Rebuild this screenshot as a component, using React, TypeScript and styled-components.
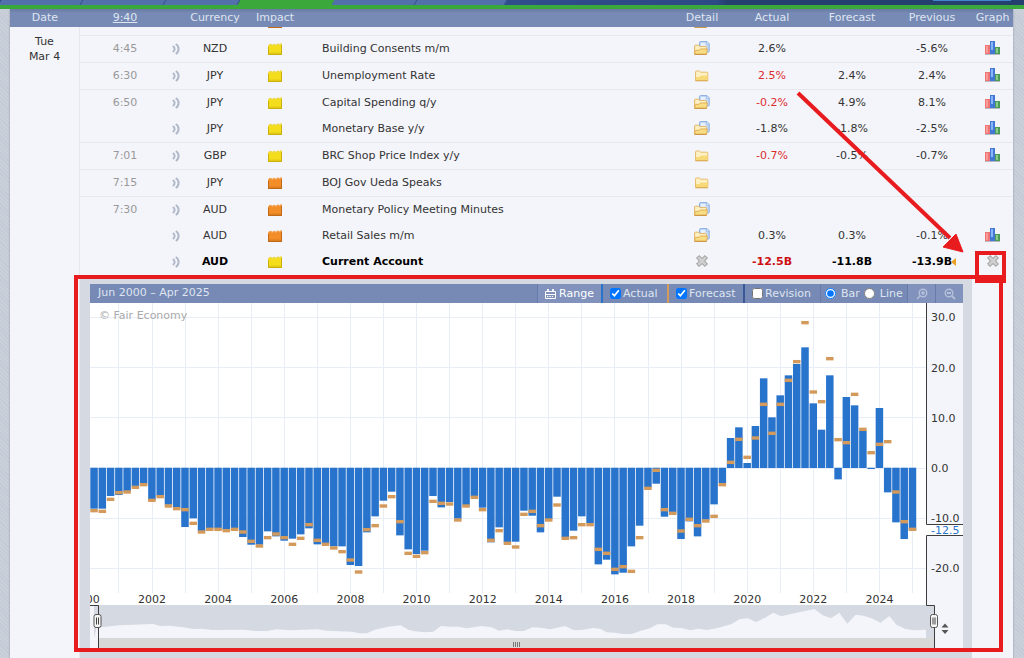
import React from "react";
import styled, { createGlobalStyle, css } from "styled-components";

const GlobalStyle = createGlobalStyle`
  *, *::before, *::after { box-sizing: border-box; }
  body {
    margin: 0;
    font-family: Verdana, "DejaVu Sans", sans-serif;
    font-size: 11px;
    color: #333;
    background: repeating-linear-gradient(45deg, #c3cad5 0 1px, #cad0da 1px 3px);
  }
  button { font: inherit; color: inherit; border: 0; padding: 0; background: none; cursor: pointer; }
`;

/* ---------- top navigation ---------- */

const NavStrip = styled.nav`
  position: relative;
  z-index: 1;
  display: flex;
  height: 9px;
  overflow: hidden;
  background: linear-gradient(90deg, #304d8c 50%, #2d4a85 70%, #25406f 71%);
  border-bottom: 4px solid #3aa83a;
`;

const NavTab = styled.a<{ $width: number; $active?: boolean }>`
  flex: none;
  width: ${(p) => p.$width}px;
  background: ${(p) => (p.$active ? "#3aa83a" : "#5270aa")};
  border-right: 1px solid ${(p) => (p.$active ? "#3aa83a" : "#33508b")};
  transform: skewX(-30deg);
`;

const NavSearch = styled.span`
  width: 78px;
  height: 1px;
  margin: 0 13px 0 auto;
  background: #3f86cf;
`;

const TABS = [
  { width: 82 },
  { width: 83 },
  { width: 74 },
  { width: 94, active: true },
  { width: 83 },
  { width: 90 },
];

/* ---------- calendar table ---------- */

const Sheet = styled.main`
  margin: 0 11px 0 10px;
  background: #f4f5fa;
  box-shadow: 0 0 2px #8d95a3;
`;

const Calendar = styled.table`
  width: 100%;
  table-layout: fixed;
  border-collapse: separate;
  border-spacing: 0;
`;

const Col = styled.col<{ $width?: number }>`
  width: ${(p) => (p.$width ? `${p.$width}px` : "auto")};
`;

const HeadCell = styled.th`
  height: 18px;
  padding: 0;
  font-weight: normal;
  line-height: 18px;
  color: #dfe5f1;
  background: linear-gradient(#6a7ba2, #768ab5 4px);
  a { color: inherit; }
`;

const DayCell = styled.th`
  padding: 7px 0 0;
  font-weight: normal;
  line-height: 15px;
  vertical-align: top;
  border-right: 1px solid #e6e8ee;
`;

const Cell = styled.td<{ $ruled?: boolean; $bold?: boolean; $tone?: "time" | "worse"; $left?: boolean }>`
  position: relative;
  height: ${(p) => (p.$ruled ? 27 : 26)}px;
  padding: 0 0 0 ${(p) => (p.$left ? 20 : 0)}px;
  line-height: 14px;
  text-align: ${(p) => (p.$left ? "left" : "center")};
  white-space: nowrap;
  ${(p) => p.$ruled && css`border-top: 1px solid #e6e8ee;`}
  ${(p) => p.$bold && css`font-weight: bold; color: #000;`}
  ${(p) => p.$tone === "time" && css`color: #999;`}
  ${(p) => p.$tone === "worse" && css`color: ${p.$bold ? "#cc0f14" : "#dc2c30"};`}
  svg { display: block; margin: 0 auto; }
`;

const IconButton = styled.button`
  display: block;
  margin: 0 auto;
  padding-bottom: 2px;
`;

const CutCell = styled.td`
  height: 8px;
  padding: 0;
`;

const CutIcon = styled.div`
  display: flex;
  justify-content: center;
  align-items: flex-end;
  height: 8px;
  padding-bottom: 7px;
  overflow: hidden;
  svg { flex: none; }
`;

const RevisedMark = styled.span`
  position: absolute;
  right: 16px;
  top: 9px;
  border: solid transparent;
  border-width: 4px 5px 4px 0;
  border-right-color: #eda022;
`;

/* ---------- chart panel ---------- */

const PanelCell = styled.td`
  position: relative;
  padding: 0;
`;

const Panel = styled.section`
  padding: 9px 9px 6px 10px;
  background: #d5d9e2;
`;

const Toolbar = styled.div`
  display: flex;
  height: 19px;
  line-height: 18px;
  color: #dfe5f1;
  background: #768ab5;
`;

const RangeTitle = styled.span`
  flex: 1;
  padding-left: 8px;
`;

const ToolButton = styled.button<{ $width: number }>`
  display: flex;
  align-items: center;
  justify-content: center;
  gap: 3px;
  width: ${(p) => p.$width}px;
  color: #fff;
  background: #8193bd;
  border-left: 1px solid #667ba9;
`;

const ToolGroup = styled.div<{ $width: number; $accent?: string }>`
  display: flex;
  align-items: center;
  gap: 4px;
  width: ${(p) => p.$width}px;
  padding-left: ${(p) => (p.$accent ? 7 : 4)}px;
  border-left: ${(p) => (p.$accent ? `2px solid ${p.$accent}` : "1px solid #667ba9")};
`;

const Option = styled.label<{ $gap?: number }>`
  display: flex;
  align-items: center;
  gap: ${(p) => p.$gap ?? 2}px;
  input {
    width: 11px;
    height: 11px;
    margin: 0;
    accent-color: #0075ff;
  }
`;

const ChartSvg = styled.svg`
  display: block;
  width: 100%;
  height: auto;
  font-size: 11px;
  fill: #333;
`;

/* ---------- annotations ---------- */

const PanelCallout = styled.div`
  position: absolute;
  inset: 0 -31px 6px -6px;
  border: 4px solid #e81c1f;
  pointer-events: none;
`;

const ButtonCallout = styled.div`
  position: absolute;
  z-index: 1;
  left: 3px;
  top: 2px;
  width: 31px;
  height: 32px;
  border: 4px solid #e81c1f;
  pointer-events: none;
`;

const ArrowAnchor = styled.td`
  position: relative;
  padding: 0;
`;

const ArrowSvg = styled.svg`
  position: absolute;
  z-index: 1;
  right: 48px;
  top: -185px;
  pointer-events: none;
`;

/* ---------- icons ---------- */

const SoundIcon = () => (
  <svg width="8" height="12" viewBox="0 0 8 12" fill="none" stroke="#b0b9c9" strokeWidth="2">
    <path d="M.8 3Q2.6 4 2.6 6Q2.6 8 .8 9" />
    <path d="M3.8 1Q6.6 2.8 6.6 6Q6.6 9.2 3.8 11" />
  </svg>
);

const ImpactIcon = ({ level }: { level: "low" | "medium" }) => {
  const [fill, edge, top] =
    level === "low" ? ["#f4de1c", "#b89c08", "#e6d468"] : ["#f28d28", "#a95b12", "#f2ac6a"];
  return (
    <svg width="14" height="12" viewBox="0 0 14 12">
      <path d="M0 3L1.5 1H3.5L4 2.4L5.2 1H7.2L7.8 2.4L9 .8H11L11.6 1.8L12.4 .6H14V12H0Z" fill={fill} />
      <path d="M0 3L1.5 1.4H3.5L4 2.8L5.2 1.4H7.2L7.8 2.8L9 1.2H11L11.6 2.2L12.4 1H14" fill="none" stroke={top} strokeWidth=".8" />
      <path d="M.5 4V11.5H13.5V2" fill="none" stroke={edge} strokeWidth="1" opacity=".7" />
      <path d="M1 9.5H13V11H1Z" fill={edge} opacity=".3" />
    </svg>
  );
};

const FolderIcon = ({ page }: { page?: boolean }) =>
  page ? (
    <svg width="16" height="14" viewBox="0 0 16 14">
      <path d="M5.5 1.6Q5.5 .6 6.5 .6H13L15.2 2.8V10Q15.2 11 14.2 11H5.5Z" fill="#c3daf8" stroke="#8caedd" />
      <path d="M7 2H11.5V5.5H7Z" fill="#e8f2fe" />
      <path d="M12.4 1V3.4H14.8" fill="#f6faff" stroke="#8caedd" strokeWidth=".7" />
      <path d="M.6 13V5Q.6 4.2 1.4 4.2H4.6L5.8 5.4H11.6Q12.4 5.4 12.4 6.2V13Z" fill="#fcefc0" stroke="#e2b566" />
      <path d="M.6 13.2L1.4 9.4H5L6.2 8H13.4L12.6 13.2Z" fill="#f9dd85" stroke="#dfac52" strokeWidth=".9" />
      <path d="M.6 13.4H12.6" stroke="#c68f3c" strokeWidth=".9" />
    </svg>
  ) : (
    <svg width="16" height="14" viewBox="0 0 16 14">
      <path d="M1.5 12.5V4Q1.5 3 2.5 3H5.6L6.8 4.2H13Q13.8 4.2 13.8 5V12.5Z" fill="#fcefc0" stroke="#e6bd6c" />
      <path d="M2 12.4V8.4H5.4L6.8 7H13.4V12.4Z" fill="#f8d977" />
      <path d="M2.4 8.4H5.4L6.8 7H13" fill="none" stroke="#fff6d6" strokeWidth=".9" />
      <path d="M1.5 12.8H13.8" stroke="#d5a04a" strokeWidth=".9" />
    </svg>
  );

const GraphIcon = () => (
  <svg width="16" height="14" viewBox="0 0 16 14">
    <rect x="0" y="4" width="5" height="9" fill="#ef7575" />
    <rect x="1" y="5" width="2" height="7" fill="#f79d98" />
    <rect x="10" y="6" width="5" height="7" fill="#4c9c58" />
    <rect x="11" y="7" width="2" height="5" fill="#8ccb8c" />
    <rect x="5" y="0" width="5" height="13" fill="#4377d6" />
    <rect x="6" y="1" width="2" height="8" fill="#8ab6f7" />
    <rect x="0" y="13" width="15" height="1" fill="#8b8f9c" opacity=".6" />
  </svg>
);

const CloseIcon = () => (
  <svg width="12" height="12" viewBox="0 0 12 12">
    <path
      d="M3 .6L6 3.4L9 .6L11.4 3L8.6 6L11.4 9L9 11.4L6 8.6L3 11.4L.6 9L3.4 6L.6 3Z"
      fill="#cfcfcf"
      stroke="#929292"
      strokeLinejoin="round"
    />
  </svg>
);

const CalendarIcon = () => (
  <svg width="11" height="10" viewBox="0 0 11 10" fill="none" stroke="#fff">
    <path d="M.5 2.5H10.5V9.5H.5ZM.5 5.5H10.5" strokeWidth="1" />
    <path d="M2 7.5H9" strokeWidth="1" strokeDasharray="1.4 1" />
    <path d="M3 0V3M8 0V3" strokeWidth="1.8" />
  </svg>
);

const ZoomIcon = ({ out }: { out?: boolean }) => (
  <svg width="12" height="12" viewBox="0 0 12 12" fill="none" stroke="#b4bfd9" strokeWidth="1.4">
    {out ? (
      <path d="M7.6 7.6L11 11M3 5H7" strokeWidth="2" />
    ) : (
      <path d="M4.2 7.8L1 11M7 3V7M5 5H9" />
    )}
    <circle cx={out ? 5 : 7} cy="5" r="3.8" />
  </svg>
);

/* ---------- data ---------- */

type EventRow = {
  time?: string;
  currency: string;
  impact: "low" | "medium";
  name: string;
  page?: boolean;
  actual?: string;
  worse?: boolean;
  forecast?: string;
  previous?: string;
  graph?: boolean;
  open?: boolean;
};

const EVENTS: EventRow[] = [
  { time: "4:45", currency: "NZD", impact: "low", name: "Building Consents m/m", page: true, actual: "2.6%", previous: "-5.6%", graph: true },
  { time: "6:30", currency: "JPY", impact: "low", name: "Unemployment Rate", actual: "2.5%", worse: true, forecast: "2.4%", previous: "2.4%", graph: true },
  { time: "6:50", currency: "JPY", impact: "low", name: "Capital Spending q/y", page: true, actual: "-0.2%", worse: true, forecast: "4.9%", previous: "8.1%", graph: true },
  { currency: "JPY", impact: "low", name: "Monetary Base y/y", page: true, actual: "-1.8%", forecast: "-1.8%", previous: "-2.5%", graph: true },
  { time: "7:01", currency: "GBP", impact: "low", name: "BRC Shop Price Index y/y", actual: "-0.7%", worse: true, forecast: "-0.5%", previous: "-0.7%", graph: true },
  { time: "7:15", currency: "JPY", impact: "medium", name: "BOJ Gov Ueda Speaks" },
  { time: "7:30", currency: "AUD", impact: "medium", name: "Monetary Policy Meeting Minutes", page: true },
  { currency: "AUD", impact: "medium", name: "Retail Sales m/m", page: true, actual: "0.3%", forecast: "0.3%", previous: "-0.1%", graph: true },
  { currency: "AUD", impact: "low", name: "Current Account", actual: "-12.5B", worse: true, forecast: "-11.8B", previous: "-13.9B", open: true },
];

/* Quarterly balances, 15 steps to the billion. */
const ACTUAL = [
  -123, -123, -85, -82, -72, -57, -49, -97, -84, -111, -121, -178, -152, -191, -182, -182, -187, -182, -208, -231,
  -231, -191, -206, -219, -213, -200, -182, -230, -229, -236, -236, -292, -295, -194, -146, -99, -72, -203, -245, -259,
  -249, -85, -119, -103, -153, -113, -86, -120, -224, -179, -224, -222, -129, -144, -194, -154, -87, -209, -189, -146,
  -166, -290, -276, -320, -315, -236, -174, -58, -48, -147, -135, -214, -161, -206, -156, -110, -46, 90, 122, 15,
  126, 269, 152, 218, 278, 312, 362, 194, 115, 278, -35, 213, 188, 112, -4, 180, -74, -164, -214, -188,
];
const FORECAST = [
  -128, -130, -94, -74, -72, -58, -50, -97, -86, -114, -122, -125, -166, -192, -184, -184, -188, -184, -192, -220,
  -234, -209, -198, -209, -229, -211, -170, -217, -229, -240, -251, -276, -312, -185, -173, -114, -86, -161, -256, -265,
  -254, -100, -106, -108, -156, -114, -88, -125, -217, -188, -226, -237, -139, -130, -173, -156, -111, -211, -209, -170,
  -170, -244, -256, -304, -296, -310, -209, -61, -7, -125, -136, -189, -154, -173, -159, -145, -50, 17, 86, 32,
  90, 191, 104, 191, 263, 319, 436, 228, 199, 328, 85, 76, 221, 116, 46, 71, 79, -72, -161, -184,
];

const ZERO_Y = 165;
const QUARTER = 8.267;
const yearX = (year: number) => 62 + (year - 2002) * 4 * QUARTER;
const YEARS = Array.from({ length: 26 }, (_, i) => 2000 + i);
const LEVELS = [30, 20, 10, 0, -10, -20];

const OVERVIEW =
  "72,595 80,563 100,561 150,556 250,552 270,558 300,557 340,562 370,567 395,566 425,570 520,569 560,573 590,573 620,568 " +
  "660,571 742,568 770,572 845,575 870,580 890,580 915,569 955,560 992,556 1015,569 1035,574 1065,577 1090,575 1113,558 " +
  "1140,560 1165,560 1190,565 1235,558 1265,562 1287,572 1313,568 1337,573 1362,573 1387,562 1412,563 1440,568 1486,558 " +
  "1511,571 1540,569 1570,564 1590,566 1610,577 1635,578 1660,582 1685,582 1710,573 1740,565 1762,553 1787,553 1810,563 " +
  "1835,564 1860,571 1885,566 1910,570 1940,565 1985,552 2008,538 2033,535 2058,546 2085,533 2110,518 2133,529 2180,518 " +
  "2233,507 2258,526 2283,535 2308,518 2332,551 2357,524 2380,527 2405,535 2432,548 2458,528 2480,555 2505,566 2530,571 " +
  "2568,569 2568,595";

const Handle = ({ x }: { x: number }) => (
  <g>
    <rect x={x} y="311.5" width="7" height="13" rx="2" fill="#f4f4f4" stroke="#555" />
    <path d={`M${x + 2.5} 314.5V321.5M${x + 4.5} 314.5V321.5`} stroke="#444" />
  </g>
);

const Chart = () => (
  <ChartSvg viewBox="0 0 873 349" role="img" aria-label="Current Account, Jun 2000 – Apr 2025">
    <rect width="837" height="302" fill="#fff" />
    <rect x="837" width="36" height="349" fill="#f4f5fa" />
    <g stroke="#e9edf5">
      {YEARS.map((y) => (
        <path key={y} d={`M${Math.floor(yearX(y)) + 0.5} 0V290`} />
      ))}
      {LEVELS.map((v) => (
        <path key={v} d={`M0 ${Math.floor(ZERO_Y - v * 5.02) + 0.5}H836`} />
      ))}
    </g>
    <g fill="#2874cd">
      {ACTUAL.map((v, i) => (
        <rect key={i} x={0.3 + i * QUARTER} y={v > 0 ? ZERO_Y - v / 3 : ZERO_Y - 0.3} width="7.5" height={Math.abs(v) / 3} />
      ))}
    </g>
    <g fill="#d39a5c">
      {FORECAST.map((v, i) => (
        <rect key={i} x={0.3 + i * QUARTER} y={ZERO_Y - v / 3 - 1.7} width="7.5" height="3.4" />
      ))}
    </g>
    <g textAnchor="middle">
      {YEARS.filter((y) => y % 2 === 0).map((y) => (
        <text key={y} x={yearX(y)} y="300">{y}</text>
      ))}
    </g>
    {LEVELS.map((v) => (
      <text key={v} x="841" y={ZERO_Y - v * 5.02 + 4}>{v.toFixed(1)}</text>
    ))}
    <rect x="836" y="222" width="37" height="10" fill="#fff" />
    <text x="841" y="231" fill="#2874cd">-12.5</text>
    <text x="9" y="16" fill="#aaa">© Fair Economy</text>

    <rect y="302" width="845" height="33" fill="#d5d9e2" />
    <rect y="303" width="4" height="46" fill="#f4f5fa" />
    <polygon points={OVERVIEW} transform="translate(-20 137) scale(.33333)" fill="#f4f5fa" />
    <rect y="335" width="8" height="14" fill="#f4f5fa" />
    <rect x="8" y="335" width="837" height="14" fill="#d8d8d8" />
    <path d="M423.5 339V344M425.5 339V344M427.5 339V344M429.5 339V344" stroke="#777" />
    <g fill="none" stroke="#3d3d3d">
      <path d="M836.5 0V221.5H873M873 232.5H836.5V302.5H844.5V349" />
      <path d="M0 302.5H8.5V349" />
    </g>
    <Handle x={4} />
    <Handle x={840.5} />
    <path d="M851.5 324.5L855 320.5L858.5 324.5ZM851.5 327L855 331L858.5 327Z" fill="#555" />
  </ChartSvg>
);

const ChartPanel = () => (
  <Panel>
    <Toolbar>
      <RangeTitle>Jun 2000 – Apr 2025</RangeTitle>
      <ToolButton $width={64}><CalendarIcon />Range</ToolButton>
      <ToolGroup $width={66} $accent="#2874cd">
        <Option><input type="checkbox" defaultChecked />Actual</Option>
      </ToolGroup>
      <ToolGroup $width={76} $accent="#d39a5c">
        <Option><input type="checkbox" defaultChecked />Forecast</Option>
      </ToolGroup>
      <ToolGroup $width={77} $accent="#3a5796">
        <Option><input type="checkbox" />Revision</Option>
      </ToolGroup>
      <ToolGroup $width={87}>
        <Option $gap={5}><input type="radio" name="style" defaultChecked />Bar</Option>
        <Option $gap={5}><input type="radio" name="style" />Line</Option>
      </ToolGroup>
      <ToolButton $width={28} aria-label="Zoom in"><ZoomIcon /></ToolButton>
      <ToolButton $width={28} aria-label="Zoom out"><ZoomIcon out /></ToolButton>
    </Toolbar>
    <Chart />
  </Panel>
);

const Arrow = () => (
  <ArrowSvg width="170" height="164" viewBox="0 0 170 164" fill="#e81c1f">
    <path d="M3 3L155 148" stroke="#e81c1f" strokeWidth="4" />
    <path d="M168 162L161 144L148 157Z" stroke="#e81c1f" />
  </ArrowSvg>
);

const EventLine = ({ event: e }: { event: EventRow }) => {
  const common = { $ruled: Boolean(e.time), $bold: e.open };
  return (
    <tr>
      <Cell {...common} $tone="time">{e.time}</Cell>
      <Cell {...common}><SoundIcon /></Cell>
      <Cell {...common}>{e.currency}</Cell>
      <Cell {...common}><ImpactIcon level={e.impact} /></Cell>
      <Cell {...common} $left>{e.name}</Cell>
      <Cell {...common}>
        <IconButton aria-label="Detail">{e.open ? <CloseIcon /> : <FolderIcon page={e.page} />}</IconButton>
      </Cell>
      <Cell {...common} $tone={e.worse ? "worse" : undefined}>{e.actual}</Cell>
      <Cell {...common}>{e.forecast}</Cell>
      <Cell {...common}>
        {e.previous}
        {e.open && <RevisedMark />}
      </Cell>
      <Cell {...common}>
        {e.graph && <IconButton aria-label="Graph"><GraphIcon /></IconButton>}
        {e.open && (
          <>
            <IconButton aria-label="Close graph"><CloseIcon /></IconButton>
            <ButtonCallout />
          </>
        )}
      </Cell>
    </tr>
  );
};

export default function App() {
  return (
    <>
      <GlobalStyle />
      <NavStrip>
        {TABS.map((t, i) => (
          <NavTab key={i} href="#" $width={t.width} $active={t.active} />
        ))}
        <NavSearch />
      </NavStrip>
      <Sheet>
        <Calendar>
          <colgroup>
            <Col $width={70} />
            <Col $width={90} />
            <Col $width={12} />
            <Col $width={66} />
            <Col $width={54} />
            <Col />
            <Col $width={60} />
            <Col $width={80} />
            <Col $width={80} />
            <Col $width={80} />
            <Col $width={41} />
          </colgroup>
          <thead>
            <tr>
              <HeadCell>Date</HeadCell>
              <HeadCell><a href="#time">9:40</a></HeadCell>
              <HeadCell />
              <HeadCell>Currency</HeadCell>
              <HeadCell>Impact</HeadCell>
              <HeadCell />
              <HeadCell>Detail</HeadCell>
              <HeadCell>Actual</HeadCell>
              <HeadCell>Forecast</HeadCell>
              <HeadCell>Previous</HeadCell>
              <HeadCell>Graph</HeadCell>
            </tr>
          </thead>
          <tbody>
            <tr>
              <DayCell rowSpan={EVENTS.length + 2}>Tue<br />Mar 4</DayCell>
              <CutCell colSpan={3} />
              <CutCell><CutIcon><ImpactIcon level="medium" /></CutIcon></CutCell>
              <CutCell />
              <CutCell><CutIcon><FolderIcon page /></CutIcon></CutCell>
              <CutCell colSpan={4} />
            </tr>
            {EVENTS.map((e) => (
              <EventLine key={e.name} event={e} />
            ))}
            <tr>
              <PanelCell colSpan={9}>
                <ChartPanel />
                <PanelCallout />
              </PanelCell>
              <ArrowAnchor>
                <Arrow />
              </ArrowAnchor>
            </tr>
          </tbody>
        </Calendar>
      </Sheet>
    </>
  );
}
